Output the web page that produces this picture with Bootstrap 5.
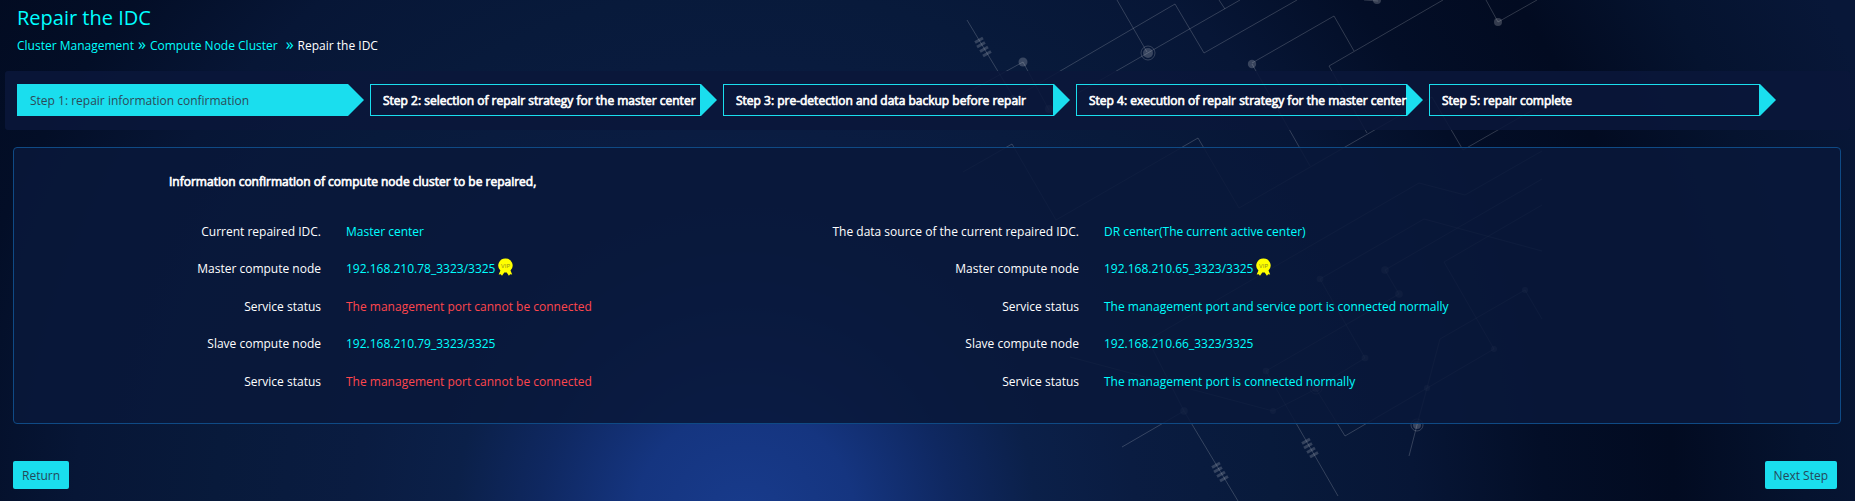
<!DOCTYPE html>
<html lang="en">
<head>
<meta charset="utf-8">
<meta name="viewport" content="width=device-width, initial-scale=1">
<title>Repair the IDC</title>
<link href="https://cdn.jsdelivr.net/npm/bootstrap@5.3.0/dist/css/bootstrap.min.css" rel="stylesheet">
<style>
  body {
    font: 12px/18px "Open Sans", sans-serif;
    color: #fff;
    height: 501px;
    overflow: hidden;
    background: radial-gradient(circle at 745px 520px, #183b8c 0, #153580 110px, #0f2861 205px, #0b2049 290px, #0a1c41 390px, #081a3b 530px, #071636 670px, #030e27 800px, #020b21 930px, #05132f 1060px, #081738 1200px);
  }
  .circuit { position: absolute; inset: 0; z-index: -1; }
  .page-title { font-size: 20px; line-height: 28px; color: #0ff; padding: 4px 0 0 17px; }
  .crumbs { padding: 5px 0 0 17px; height: 39px; }
  .crumbs a { color: #0ff; text-decoration: none; }
  .crumbs .sep { color: #0ff; font-size: 16px; line-height: 15px; }
  .step-bar { margin: 0 5px; height: 59px; padding: 13px 12px; gap: 6px; border-radius: 3px; background: rgba(10, 23, 58, .88); }
  .step-item { width: 347px; height: 32px; }
  .step-item .step-label { width: 331px; border: 1px solid #1adeee; padding: 0 0 0 12px; line-height: 31px; white-space: nowrap; }
  .step-item::after { content: ""; width: 16px; background: #1adeee; clip-path: polygon(0 0, 100% 50%, 0 100%); }
  .step-item.current .step-label { background: #1adeee; color: #2d4a58; }
  .heavy { -webkit-text-stroke: .65px #fff; }
  .info-panel { margin: 17px 14px 0 13px; height: 277px; border: 1px solid #0f4a85; border-radius: 4px; background: rgba(9, 24, 58, .88); }
  .info-title { padding: 25px 0 0 155px; }
  .info-grid { display: grid; grid-template-columns: 307px 451px 307px 1fr; grid-auto-rows: 37.5px; padding-top: 22px; }
  .info-grid > .name { text-align: right; }
  .info-grid > .value { padding-left: 25px; color: #0ff; }
  .info-grid > .fault { color: #ff464d; }
  .vip { width: 15px; height: 18px; margin: -6px 0 0 3px; vertical-align: middle; }
  .foot { padding: 37px 18px 0 13px; }
  .btn-cyan { --bs-btn-padding-x: 9px; --bs-btn-padding-y: 0; --bs-btn-font-size: 12px; --bs-btn-line-height: 30px; --bs-btn-border-width: 0; --bs-btn-border-radius: 2px; --bs-btn-bg: #1adeee; --bs-btn-color: #24485a; --bs-btn-hover-bg: #45e6f2; height: 28px; padding-top: 1px; line-height: 27px; white-space: nowrap; }
</style>
</head>
<body>
<svg class="circuit" width="1855" height="501" fill="none" stroke="#fff" stroke-opacity=".18" aria-hidden="true">
  <defs>
    <g id="coil" stroke-width="3"><path d="M-5 -5.500 3 -10M-3 -1 5-5.500M0 3.500 8-1M3 8 11 3.500"/></g>
  </defs>
  <g>
    <path d="M967 20 1014 98 1175 4 1204 53 1297 0"/>
    <path d="M963 95 1023 62 1049 110M1078 93 1240 0M1117 0 1147 52M1219 0 1225 9"/>
    <path d="M1252 63 1334 16 1354 51M1443 0 1329 66 1367 133M1252 64 1310 166"/>
    <path d="M963 172 1012 144 1056 220 1198 138 1239 208 1432 97 1463 150 1545 103"/>
    <path d="M1486 0 1498 22 1537 0M1364 0 1378 1"/>
    <path d="M1542 151 1465 195 1419 183 1148 340 1184 411 1238 501"/>
    <path d="M1542 179 1385 270 1399 294 1266 371 1338 496"/>
    <path d="M1542 205 1444 262 1494 349 1345 436 1316 389 1273 411 1070 357"/>
    <path d="M1542 251 1424 219 1320 279 1365 358 1316 388"/>
    <path d="M1542 319 1525 290 1440 339 1427 388 1417 425 1409 456"/>
    <path d="M1184 411 1122 447"/>
  </g>
  <g fill="#fff" fill-opacity=".2" stroke="none">
    <circle cx="1023" cy="62" r="4.500"/><circle cx="1049" cy="109" r="4"/><circle cx="1013" cy="98" r="3"/>
    <circle cx="1148" cy="53" r="5"/><circle cx="1252" cy="64" r="4.200"/><circle cx="1498" cy="22" r="4"/><circle cx="1377" cy="0" r="4"/>
    <circle cx="1385" cy="270" r="3.800"/><circle cx="1399" cy="294" r="3.800"/><circle cx="1320" cy="279" r="3.300"/><circle cx="1365" cy="358" r="3.300"/>
    <circle cx="1266" cy="371" r="3.300"/><circle cx="1525" cy="290" r="3"/><circle cx="1494" cy="349" r="3"/><circle cx="1427" cy="388" r="3"/>
    <circle cx="1184" cy="411" r="3.800"/><circle cx="1273" cy="411" r="3"/><circle cx="1316" cy="388" r="4"/><circle cx="1417" cy="425" r="4"/>
  </g>
  <circle cx="1148" cy="53" r="7"/><circle cx="1316" cy="388" r="6"/><circle cx="1417" cy="425" r="6"/>
  <use href="#coil" x="980" y="48"/><use href="#coil" x="1217" y="473"/><use href="#coil" x="1307" y="449"/>
</svg>

<h1 class="page-title fw-normal m-0">Repair the IDC</h1>
<nav class="crumbs d-flex" aria-label="breadcrumb">
  <a href="#">Cluster Management</a><span class="sep ms-1 me-1">»</span>
  <a href="#">Compute Node Cluster</a><span class="sep ms-2 me-1">»</span>
  <span>Repair the IDC</span>
</nav>

<div class="step-bar d-flex">
  <div class="step-item d-flex current"><div class="step-label">Step 1: repair information confirmation</div></div>
  <div class="step-item d-flex"><div class="step-label heavy">Step 2: selection of repair strategy for the master center</div></div>
  <div class="step-item d-flex"><div class="step-label heavy">Step 3: pre-detection and data backup before repair</div></div>
  <div class="step-item d-flex"><div class="step-label heavy">Step 4: execution of repair strategy for the master center</div></div>
  <div class="step-item d-flex"><div class="step-label heavy">Step 5: repair complete</div></div>
</div>

<main class="info-panel">
  <div class="info-title heavy">Information confirmation of compute node cluster to be repaired,</div>
  <div class="info-grid align-items-center">
    <div class="name">Current repaired IDC.</div><div class="value">Master center</div>
    <div class="name">The data source of the current repaired IDC.</div><div class="value">DR center(The current active center)</div>

    <div class="name">Master compute node</div>
    <div class="value">192.168.210.78_3323/3325<svg class="vip" viewBox="0 0 15 18"><path fill="#ff0" d="M7.500.5a7 7 0 0 1 5 12l1.700 4-2-.3-1.300 1.600-2.200-3.300h-2.400L4 17.800l-1.300-1.600-2 .3 1.700-4a7 7 0 0 1 5.100-12z"/><text x="3" y="10" font-size="6" fill="#8a8a20" textLength="9">VIP</text></svg></div>
    <div class="name">Master compute node</div>
    <div class="value">192.168.210.65_3323/3325<svg class="vip" viewBox="0 0 15 18"><path fill="#ff0" d="M7.500.5a7 7 0 0 1 5 12l1.700 4-2-.3-1.300 1.600-2.200-3.300h-2.400L4 17.800l-1.300-1.600-2 .3 1.700-4a7 7 0 0 1 5.100-12z"/><text x="3" y="10" font-size="6" fill="#8a8a20" textLength="9">VIP</text></svg></div>

    <div class="name">Service status</div><div class="value fault">The management port cannot be connected</div>
    <div class="name">Service status</div><div class="value">The management port and service port is connected normally</div>

    <div class="name">Slave compute node</div><div class="value">192.168.210.79_3323/3325</div>
    <div class="name">Slave compute node</div><div class="value">192.168.210.66_3323/3325</div>

    <div class="name">Service status</div><div class="value fault">The management port cannot be connected</div>
    <div class="name">Service status</div><div class="value">The management port is connected normally</div>
  </div>
</main>

<div class="foot d-flex justify-content-between">
  <button type="button" class="btn btn-cyan">Return</button>
  <button type="button" class="btn btn-cyan">Next Step</button>
</div>
<script src="https://cdn.jsdelivr.net/npm/bootstrap@5.3.0/dist/js/bootstrap.bundle.min.js"></script>
</body>
</html>
